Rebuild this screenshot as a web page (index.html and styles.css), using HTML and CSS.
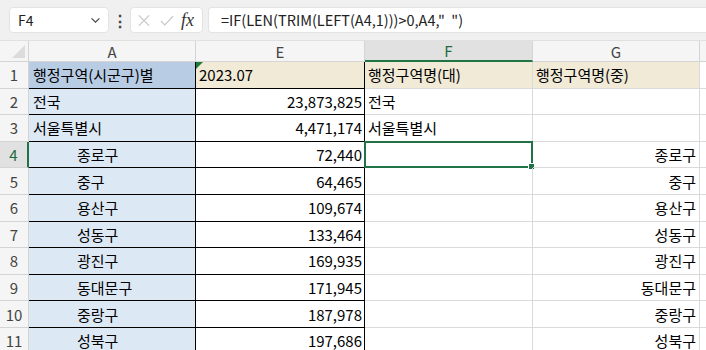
FILE: index.html
```html
<!DOCTYPE html>
<html>
<head>
    <link rel="stylesheet" href="styles.css">
</head>

<body>
    <header class="bar">
        <div class="namebox">
            <span>F4</span>
            <svg class="chev" viewBox="0 0 12 8"><path d="M1.5 1.5 L6 6 L10.5 1.5"></path></svg>
        </div>
        <span class="dots">⋮</span>
        <div class="fnbox">
            <svg class="ico" viewBox="0 0 14 14"><path d="M1.5 1.5 L12.5 12.5 M12.5 1.5 L1.5 12.5"></path></svg>
            <svg class="ico" viewBox="0 0 16 14"><path d="M1 7.5 L5.5 12 L15 2"></path></svg>
            <span class="fx">fx</span>
        </div>
        <div class="formula">=IF(LEN(TRIM(LEFT(A4,1)))&gt;0,A4,"&nbsp;&nbsp;")</div>
    </header>

    <section class="sheet" id="sheet">
        <div class="hd corner"><span class="tri"></span></div>
        <div class="hd col">A</div>
        <div class="hd col">E</div>
        <div class="hd col sel">F</div>
        <div class="hd col">G</div>
        <div class="hd rest"></div>
    </section>

    <script>
        const rows = [
            ["1", "행정구역(시군구)별", "2023.07", "행정구역명(대)", "행정구역명(중)"],
            ["2", "전국", "23,873,825", "전국", ""],
            ["3", "서울특별시", "4,471,174", "서울특별시", ""],
            ["4", "종로구", "72,440", "", "종로구"],
            ["5", "중구", "64,465", "", "중구"],
            ["6", "용산구", "109,674", "", "용산구"],
            ["7", "성동구", "133,464", "", "성동구"],
            ["8", "광진구", "169,935", "", "광진구"],
            ["9", "동대문구", "171,945", "", "동대문구"],
            ["10", "중랑구", "187,978", "", "중랑구"],
            ["11", "성북구", "197,686", "", "성북구"]
        ];
        const sheet = document.getElementById("sheet");
        function cell(cls, text) {
            const d = document.createElement("div");
            d.className = cls;
            d.textContent = text;
            sheet.appendChild(d);
            return d;
        }
        rows.forEach((r, i) => {
            const top = i == 0;
            cell("hd rownum" + (i == 3 ? " sel" : ""), r[0]);
            cell("c a" + (top ? " a1" : "") + (i > 2 ? " indent" : ""), r[1]);
            const e = cell("c e" + (top ? " e1" : " num"), r[2]);
            if (top) e.insertAdjacentHTML("afterbegin", '<span class="err"></span>');
            const f = cell("c f" + (top ? " top" : ""), r[3]);
            if (i == 3) f.insertAdjacentHTML("afterbegin", '<span class="cursor"><span class="handle"></span></span>');
            cell("c g" + (top ? " top" : " right"), r[4]);
            cell("c rest", "");
        });
    </script>
</body>
</html>
```

FILE: styles.css
```css
body {
    margin: 0;
    width: 706px;
    height: 350px;
    overflow: hidden;
    background: #fff;
    font-family: "Noto Sans CJK KR", "Noto Sans", sans-serif;
    color: #000;
}

.bar {
    display: flex;
    align-items: center;
    height: 41px;
    padding-left: 9px;
    background: #f0f0f0;
    border-bottom: 1px solid #e0e0e0;
    box-sizing: border-box;
}
.namebox {
    display: flex;
    align-items: center;
    justify-content: space-between;
    width: 100px;
    height: 26px;
    padding: 0 7px 0 8px;
    box-sizing: border-box;
    background: #fff;
    border: 1px solid #e3e3e3;
    border-radius: 4px;
    font-size: 14px;
    color: #222;
}
.chev {
    width: 11px;
    height: 7px;
    fill: none;
    stroke: #444;
    stroke-width: 1.3px;
}
.dots {
    width: 20px;
    margin-left: 1px;
    text-align: center;
    font-size: 16px;
    font-weight: bold;
    color: #444;
}
.fnbox {
    display: flex;
    align-items: center;
    gap: 9px;
    width: 73px;
    height: 26px;
    padding-left: 6px;
    box-sizing: border-box;
    background: #fff;
    border: 1px solid #e3e3e3;
    border-radius: 4px;
}
.ico {
    width: 14px;
    height: 13px;
    fill: none;
    stroke: #c4c4c4;
    stroke-width: 1.2px;
}
.fx {
    font-family: "Liberation Serif", serif;
    font-style: italic;
    font-size: 18px;
    line-height: 18px;
    color: #333;
    margin-left: -2px;
}
.formula {
    flex: 1;
    height: 26px;
    margin-left: 5px;
    padding-left: 12px;
    box-sizing: border-box;
    background: #fff;
    border: 1px solid #e3e3e3;
    border-right: none;
    border-radius: 4px 0 0 4px;
    font-size: 14.5px;
    line-height: 24px;
    color: #222;
    white-space: pre;
}

.sheet {
    display: grid;
    grid-template-columns: 29px 167px 169px 168px 167px 6px;
    grid-template-rows: 21px repeat(11, 26.6px);
    font-size: 15px;
}
.hd {
    position: relative;
    background: #f5f5f5;
    color: #444;
    display: flex;
    align-items: center;
    justify-content: center;
    box-sizing: border-box;
    border-right: 1px solid #d4d4d4;
    border-bottom: 1px solid #d4d4d4;
    font-size: 15px;
}
.tri {
    position: absolute;
    right: 3px;
    bottom: 3px;
    width: 0;
    height: 0;
    border-left: 13px solid transparent;
    border-bottom: 13px solid #dcdcdc;
}
.hd.sel {
    background: #e1e1e1;
    color: #1e6b3f;
}
.hd.col.sel {
    border-bottom: 2px solid #217346;
}
.hd.rownum.sel {
    border-right: 2px solid #217346;
}
.hd.rest {
    border-right: none;
}

.c {
    position: relative;
    display: flex;
    align-items: center;
    padding: 0 3px;
    box-sizing: border-box;
    border-right: 1px solid #dadada;
    border-bottom: 1px solid #dadada;
    white-space: nowrap;
}
.c.a {
    background: #dde8f5;
    border-right-color: #000;
    border-bottom-color: #000;
    padding-left: 4px;
}
.c.a1 {
    background: #b8cce4;
}
.c.indent {
    padding-left: 48px;
}
.c.e {
    border-right-color: #000;
    border-bottom-color: #000;
}
.c.e1,
.c.top {
    background: #f0ead6;
}
.c.num {
    justify-content: flex-end;
    padding-right: 2px;
}
.c.right {
    justify-content: flex-end;
}
.c.rest {
    border-right: none;
}
.err {
    position: absolute;
    left: 0;
    top: 0;
    width: 0;
    height: 0;
    border-top: 7px solid #1e7a3c;
    border-right: 7px solid transparent;
}
.cursor {
    position: absolute;
    left: -1px;
    top: -1px;
    right: -1px;
    bottom: -1px;
    border: 2px solid #217346;
}
.handle {
    position: absolute;
    right: -4px;
    bottom: -4px;
    width: 5px;
    height: 5px;
    background: #217346;
    border: 1px solid #fff;
}
```
